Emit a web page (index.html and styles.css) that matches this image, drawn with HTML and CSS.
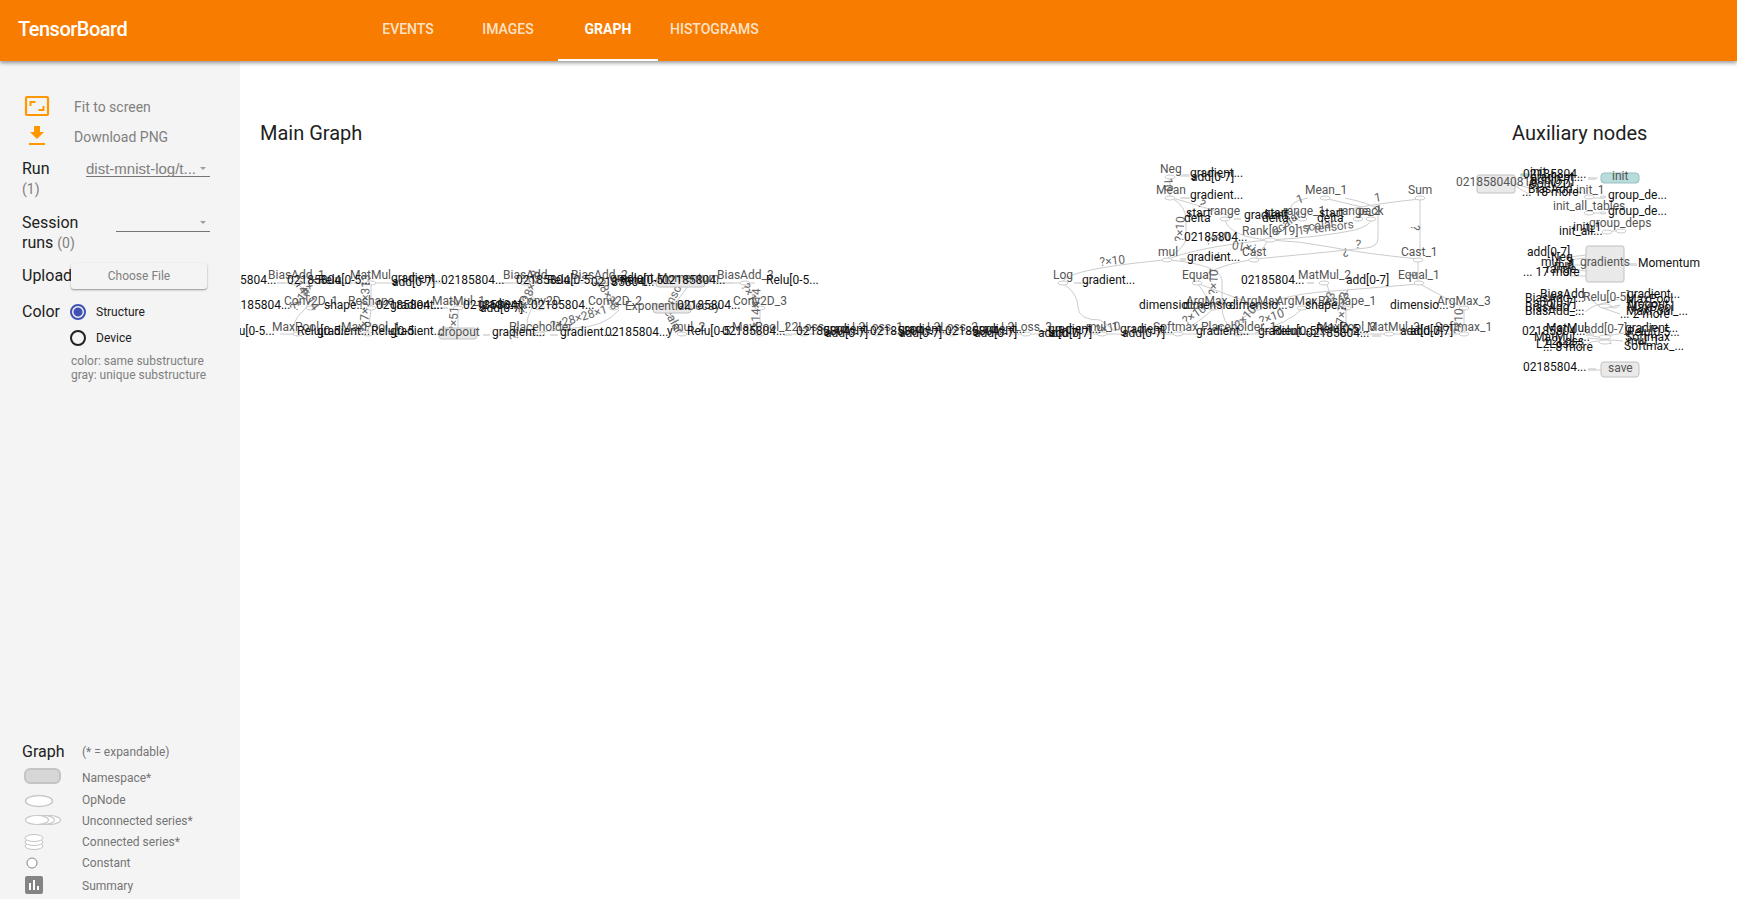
FILE: index.html
```html
<!DOCTYPE html>
<html lang="en">
<head>
<meta charset="utf-8">
<title>TensorBoard</title>
<link rel="stylesheet" href="styles.css">
</head>
<body>
<header class="toolbar">
  <h1 class="brand">TensorBoard</h1>
  <nav class="tabs">
    <a class="tab" href="#events">EVENTS</a>
    <a class="tab" href="#images">IMAGES</a>
    <a class="tab active" href="#graph" aria-current="page">GRAPH</a>
    <a class="tab" href="#histograms">HISTOGRAMS</a>
  </nav>
</header>
<div class="content">
  <aside class="sidebar">
    <div class="controls">
      <button class="action" type="button">
        <svg class="icon" width="30" height="30" viewBox="0 0 30 30"><path fill="none" stroke="#ff9800" stroke-width="2.200" d="M5 5h20q1 0 1 1v16q0 1-1 1H5q-1 0-1-1V6q0-1 1-1z"/><path fill="none" stroke="#ff9800" stroke-width="2" d="M8.500 14v-4h5M21.500 14v4h-5"/></svg>
        Fit to screen
      </button>
      <button class="action" type="button">
        <svg class="icon" width="30" height="30" viewBox="0 0 30 30"><path fill="#ff9800" d="M12 4h6v6h4l-7 7-7-7h4zM7 21h16v2H7z"/></svg>
        Download PNG
      </button>
      <div class="field">
        <label class="title" for="run">Run <small class="count block">(1)</small></label>
        <span class="dropdown"><select id="run"><option>dist-mnist-log/t...</option></select></span>
      </div>
      <div class="field sessions">
        <label class="title" for="session">Session runs <small class="count">(0)</small></label>
        <span class="dropdown"><select id="session"><option></option></select></span>
      </div>
      <div class="upload">
        <span class="title" id="upload-title">Upload</span>
        <button class="choose" type="button">Choose File</button>
      </div>
      <div class="color" role="radiogroup" aria-labelledby="color-title">
        <span class="title" id="color-title">Color</span>
        <div class="choices">
          <label class="choice"><input type="radio" name="color" checked>Structure</label>
          <label class="choice"><input type="radio" name="color">Device</label>
          <p class="note">color: same substructure<br>gray: unique substructure</p>
        </div>
      </div>
    </div>
    <div class="legend">
      <div class="legend-row head"><span class="title">Graph</span><span>(* = expandable)</span></div>
      <div class="legend-row tall"><svg width="40" height="20"><rect x="3" y="1" width="35" height="14" rx="5" fill="#d6d6d6" stroke="#c4c4c4" stroke-width="2"/></svg><span>Namespace*</span></div>
      <div class="legend-row"><svg width="40" height="20"><ellipse cx="17" cy="11" rx="13.500" ry="5.500" fill="#fff" stroke="#c8c8c8" stroke-width="1.500"/></svg><span>OpNode</span></div>
      <div class="legend-row"><svg width="40" height="20"><g fill="#fff" stroke="#c8c8c8" stroke-width="1.200"><ellipse cx="27" cy="9" rx="11.500" ry="4.500"/><ellipse cx="21" cy="9" rx="11.500" ry="4.500"/><ellipse cx="15" cy="9" rx="11.500" ry="4.500"/></g></svg><span>Unconnected series*</span></div>
      <div class="legend-row"><svg width="40" height="20"><g fill="#fff" stroke="#c4c4c4"><ellipse cx="12" cy="14" rx="9" ry="3.500"/><ellipse cx="12" cy="10" rx="9" ry="3.500"/><ellipse cx="12" cy="6" rx="9" ry="3.500"/></g></svg><span>Connected series*</span></div>
      <div class="legend-row"><svg width="40" height="20"><circle cx="10" cy="10" r="5" fill="#fff" stroke="#888"/></svg><span>Constant</span></div>
      <div class="legend-row last"><svg width="40" height="20"><rect x="3" y="0" width="18" height="18" rx="2" fill="#848484"/><path fill="#fff" d="M7 7h2v7H7zM11 4h2v10h-2zM15 10h2v4h-2z"/></svg><span>Summary</span></div>
    </div>
  </aside>
  <main class="stage">
    <svg class="graph" role="img" aria-label="Main graph and auxiliary nodes">
      <g transform="translate(-240 -61)">
        <g class="edges">
          <path d="M1170 177V197M1172 198Q1186 206 1186 220T1186 240Q1182 250 1168 258M1172 198Q1192 203 1230 216M1225 220Q1230 237 1270 240Q1300 241 1330 247T1418 259M1308 198Q1285 202 1293 214M1345 198Q1378 205 1378 212V238Q1378 247 1366 248Q1310 254 1255 259M1420 199Q1380 203 1345 210M1420 200V257M1328 199L1362 207M1270 240Q1322 237 1355 230Q1371 225 1372 219M1267 242L1256 258M1267 240Q1200 247 1171 258M1165 260Q1100 266 1075 274Q1066 277 1063 281M1064 284Q1078 294 1078 307T1100 320L1114 330M1170 260Q1220 265 1222 280V305Q1221 322 1236 333M1250 260Q1210 267 1198 281M1198 284L1213 306M1199 284L1258 306M1327 284Q1329 300 1346 307V333M1418 262V281M1418 284Q1360 289 1320 292Q1280 296 1267 305M1420 284L1460 306M1464 309V333M1213 309Q1200 322 1179 333M1302 309Q1290 322 1255 333M1258 309Q1234 320 1230 333"/>
          <path d="M298 284Q315 300 303 311T294 333M371 284V309L368 333M458 309V328M527 284Q537 298 531 310T528 326Q522 335 534 336M602 284Q614 300 615 308M619 310Q605 327 574 328Q545 331 531 334M689 285L670 310M669 313L683 333M743 284Q755 290 754 307M760 309V333"/>
          <path d="M786 334h294M280 334h120M280 283h165M500 283h255M1070 334h130M1210 334h250M1180 176h10M1180 198h10M1080 283h10"/>
          <path d="M1515 184l14-9M1515 184l14 4M1515 186l14 8M1588 178h10M1592 198h12M1592 213h12M1605 231h12M1570 257l16-2M1570 260l16-2M1570 265h16M1570 269l16 2M1570 276h16M1624 264h12M1584 295q8 5 14 10q5 4 22 0q-5 6-15 0q-8-3-20 7M1597 305l22-6M1600 307l20 7M1587 333q10 8 25 0M1587 344q10-6 25 0M1587 338l36 3M1600 337l24-4M1588 370h14"/>
        </g>
        <g class="nodes">
          <ellipse cx="1170" cy="177" rx="5" ry="2"/><ellipse cx="1170" cy="198" rx="5" ry="2"/><ellipse cx="1225" cy="219" rx="5" ry="2"/><ellipse cx="1302" cy="219" rx="5" ry="2"/><ellipse cx="1358" cy="219" rx="5" ry="2"/><ellipse cx="1371" cy="219" rx="5" ry="2"/><ellipse cx="1325" cy="198" rx="5" ry="2"/><ellipse cx="1420" cy="198" rx="5" ry="2"/><ellipse cx="1270" cy="240" rx="6" ry="2"/><ellipse cx="1167" cy="260" rx="5" ry="2"/><ellipse cx="1254" cy="260" rx="5" ry="2"/><ellipse cx="1418" cy="260" rx="5" ry="2"/><ellipse cx="1063" cy="283" rx="5" ry="2"/><ellipse cx="1197" cy="283" rx="5" ry="2"/><ellipse cx="1324" cy="283" rx="5" ry="2"/><ellipse cx="1419" cy="283" rx="5" ry="2"/><ellipse cx="1213" cy="308" rx="5" ry="2"/><ellipse cx="1258" cy="308" rx="5" ry="2"/><ellipse cx="1302" cy="308" rx="5" ry="2"/><ellipse cx="1346" cy="308" rx="5" ry="2"/><ellipse cx="1464" cy="308" rx="5" ry="2"/><ellipse cx="1178" cy="334" rx="5" ry="2"/><ellipse cx="1238" cy="334" rx="5" ry="2"/><ellipse cx="1346" cy="334" rx="5" ry="2"/><ellipse cx="1389" cy="334" rx="5" ry="2"/><ellipse cx="1464" cy="334" rx="5" ry="2"/><ellipse cx="1102" cy="334" rx="5" ry="2"/><ellipse cx="295" cy="283" rx="5" ry="2"/><ellipse cx="371" cy="283" rx="5" ry="2"/><ellipse cx="525" cy="283" rx="5" ry="2"/><ellipse cx="599" cy="283" rx="5" ry="2"/><ellipse cx="745" cy="283" rx="5" ry="2"/><ellipse cx="311" cy="308" rx="5" ry="2"/><ellipse cx="371" cy="308" rx="5" ry="2"/><ellipse cx="458" cy="308" rx="5" ry="2"/><ellipse cx="540" cy="308" rx="5" ry="2"/><ellipse cx="614" cy="308" rx="5" ry="2"/><ellipse cx="760" cy="308" rx="5" ry="2"/><ellipse cx="298" cy="334" rx="5" ry="2"/><ellipse cx="368" cy="334" rx="5" ry="2"/><ellipse cx="540" cy="334" rx="5" ry="2"/><ellipse cx="682" cy="334" rx="5" ry="2"/><ellipse cx="760" cy="334" rx="5" ry="2"/><ellipse cx="804" cy="334" rx="5" ry="2"/><ellipse cx="878" cy="334" rx="5" ry="2"/><ellipse cx="952" cy="334" rx="5" ry="2"/><ellipse cx="1026" cy="334" rx="5" ry="2"/>
          <ellipse cx="1589" cy="197" rx="5" ry="2"/><ellipse cx="1603" cy="197" rx="3" ry="1"/><ellipse cx="1589" cy="213" rx="5" ry="2"/><ellipse cx="1603" cy="213" rx="3" ry="1"/><ellipse cx="1607" cy="232" rx="5" ry="2"/><ellipse cx="1621" cy="231" rx="5" ry="2"/><ellipse cx="1605" cy="306" rx="6" ry="2"/><ellipse cx="1605" cy="337" rx="6" ry="2"/><ellipse cx="1605" cy="342" rx="6" ry="2"/>
        </g>
        <g class="stubs">
          <rect x="1182" y="174" width="7" height="2"/><rect x="1182" y="197" width="7" height="2"/><rect x="1234" y="218" width="7" height="2"/><rect x="1180" y="258" width="6" height="3"/><rect x="1074" y="282" width="7" height="2"/><rect x="1307" y="282" width="7" height="2"/><rect x="1372" y="334" width="9" height="3"/><rect x="440" y="307" width="8" height="2"/><rect x="483" y="334" width="7" height="2"/><rect x="277" y="282" width="8" height="2"/><rect x="505" y="282" width="8" height="2"/><rect x="726" y="282" width="8" height="2"/><rect x="550" y="334" width="8" height="2"/><rect x="784" y="334" width="8" height="2"/><rect x="1588" y="177" width="8" height="3"/><rect x="1588" y="368" width="8" height="3"/><rect x="1630" y="263" width="7" height="3"/><rect x="1586" y="333" width="8" height="3"/>
        </g>
        <g class="dims">
          <text transform="translate(296 312) rotate(-55)">?×14×1</text><text transform="translate(294 284) rotate(55)">14×14</text><text transform="translate(368 333) rotate(-88)">?×7×7×313</text><text transform="translate(457 332) rotate(-88)">?×512</text><text transform="translate(526 315) rotate(-72)">?×28×28</text><text transform="translate(518 340) rotate(-88)">?×</text><text transform="translate(552 330) rotate(-17)">?×28×28×1</text><text transform="translate(596 282) rotate(60)">28×28</text><text transform="translate(668 314) rotate(-62)">tensors</text><text transform="translate(661 306) rotate(62)">scalar</text><text transform="translate(759 334) rotate(-88)">?×14×14</text><text transform="translate(741 286) rotate(62)">?×14</text>
          <text transform="translate(1164 178) rotate(88)">10</text><text transform="translate(1183 242) rotate(-86)">?×10</text><text transform="translate(1206 245) rotate(-12)">?×10</text><text transform="translate(1258 245) rotate(190)">?×10</text><text transform="translate(1100 266) rotate(-6)">?×10</text><text transform="translate(1298 204) rotate(-20)">1</text><text transform="translate(1375 202) rotate(-10)">1</text><text transform="translate(1298 235) rotate(-7)">17 tensors</text><text transform="translate(1276 236) rotate(-38)">scalar</text><text transform="translate(1303 232) rotate(-9)">scalar</text><text transform="translate(1355 248) rotate(5)">?</text><text transform="translate(1348 248) rotate(175)">?</text><text transform="translate(1411 225) rotate(90)">?</text><text transform="translate(1217 295) rotate(-88)">?×10</text><text transform="translate(1221 252) rotate(175)">?</text><text transform="translate(1186 325) rotate(-35)">?×10</text><text transform="translate(1240 329) rotate(-48)">?×10</text><text transform="translate(1261 325) rotate(-20)">?×10</text><text transform="translate(1331 306) rotate(-70)">×3</text><text transform="translate(1344 325) rotate(-82)">7×7×3</text><text transform="translate(1462 334) rotate(-88)">?×10</text><text transform="translate(1407 273) rotate(75)">?</text><text transform="translate(1197 205) rotate(40)">?</text><text transform="translate(1350 291) rotate(190)">?</text><text transform="translate(1096 334) rotate(-10)">?×10</text>
        </g>
        <g class="boxes">
          <rect x="656" y="277" width="49" height="10" rx="3"/><rect x="653" y="304" width="38" height="9" rx="3"/><rect x="439" y="328" width="38" height="11" rx="3"/><rect x="1477" y="175" width="38" height="18" rx="2"/><rect x="1586" y="246" width="38" height="36" rx="2"/><rect x="1601" y="362" width="38" height="15" rx="3"/><rect class="teal" x="1601" y="173" width="38" height="10" rx="3"/><rect class="teal" x="1521" y="174" width="9" height="2"/>
        </g>
        <g class="labels">
          <text x="268" y="279">BiasAdd_1</text><text x="350" y="279">MatMul</text><text x="503" y="279">BiasAdd</text><text x="571" y="279">BiasAdd_2</text><text x="657" y="282">Momentum</text><text x="717" y="279">BiasAdd_3</text>
          <text x="284" y="305">Conv2D_1</text><text x="348" y="305">Reshape</text><text x="432" y="305">MatMul_1</text><text x="519" y="305">Conv2D</text><text x="588" y="305">Conv2D_2</text><text x="625" y="310">ExponentialDecay</text><text x="733" y="305">Conv2D_3</text>
          <text x="272" y="331">MaxPool</text><text x="341" y="331">MaxPool_1</text><text x="438" y="336">dropout</text><text x="509" y="331">Placeholder</text><text x="673" y="331">mul_2</text><text x="732" y="331">MaxPool_2</text><text x="785" y="331">L2Loss</text><text x="852" y="331">L2Loss_1</text><text x="927" y="331">L2Loss_2</text><text x="1001" y="331">L2Loss_3</text><text x="1086" y="331">mul_1</text><text x="1153" y="331">Softmax</text><text x="1201" y="331">Placeholder_1</text><text x="1317" y="331">MaxPool_3</text><text x="1367" y="331">MatMul_3</text><text x="1435" y="331">Softmax_1</text>
          <text x="1160" y="173">Neg</text><text x="1156" y="194">Mean</text><text x="1210" y="215">range</text><text x="1283" y="215">range_1</text><text x="1338" y="215">range_2</text><text x="1358" y="215">pack</text><text x="1242" y="235">Rank[0-19]</text><text x="1305" y="194">Mean_1</text><text x="1408" y="194">Sum</text><text x="1158" y="256">mul</text><text x="1242" y="256">Cast</text><text x="1401" y="256">Cast_1</text><text x="1053" y="279">Log</text><text x="1182" y="279">Equal</text><text x="1298" y="279">MatMul_2</text><text x="1398" y="279">Equal_1</text><text x="1186" y="305">ArgMax_1</text><text x="1239" y="305">ArgMax</text><text x="1276" y="305">ArgMax_2</text><text x="1318" y="305">Reshape_1</text><text x="1437" y="305">ArgMax_3</text>
          <text x="1456" y="186">021858040816</text><text x="1612" y="180">init</text><text x="1576" y="194">init_1</text><text x="1553" y="210">init_all_tables</text><text x="1589" y="227">group_deps</text><text x="1580" y="266">gradients</text><text x="1583" y="301">Relu[0-5]</text><text x="1584" y="333">add[0-7]</text><text x="1608" y="372">save</text>
        </g>
        <g class="notes">
          <text x="213" y="284">02185804...</text><text x="287" y="284">02185804...</text><text x="318" y="284">Relu[0-5...</text><text x="391" y="282">gradient...</text><text x="392" y="286">add[0-7]</text><text x="441" y="284">02185804...</text><text x="516" y="284">02185804...</text><text x="547" y="284">Relu[0-5...</text><text x="591" y="286">02185804...</text><text x="610" y="282">gradient...</text><text x="620" y="284">Relu[0-5...</text><text x="662" y="284">02185804...</text><text x="766" y="284">Relu[0-5...</text>
          <text x="227" y="309">02185804...</text><text x="324" y="309">shape...</text><text x="376" y="309">02185804...</text><text x="390" y="309">gradient...</text><text x="463" y="309">02185804...</text><text x="478" y="308">gradient...</text><text x="480" y="312">add[0-7]</text><text x="531" y="309">02185804...</text><text x="677" y="309">02185804...</text>
          <text x="222" y="335">Relu[0-5...</text><text x="297" y="335">Relu[0-5...</text><text x="317" y="335">gradient...</text><text x="371" y="335">Relu[0-5...</text><text x="390" y="335">gradient...</text><text x="492" y="336">gradient...</text><text x="560" y="336">gradient...</text><text x="605" y="336">02185804...</text><text x="667" y="335">y</text><text x="687" y="335">Relu[0-5...</text><text x="722" y="335">02185804...</text><text x="796" y="335">02185804...</text><text x="823" y="333">gradient...</text><text x="825" y="337">add[0-7]</text><text x="870" y="335">02185804...</text><text x="898" y="333">gradient...</text><text x="899" y="337">add[0-7]</text><text x="945" y="335">02185804...</text><text x="972" y="333">gradient...</text><text x="974" y="337">add[0-7]</text><text x="1048" y="333">gradient...</text><text x="1038" y="337">add[0-7]</text><text x="1049" y="337">add[0-7]</text><text x="1120" y="333">gradient...</text><text x="1122" y="337">add[0-7]</text><text x="1196" y="335">gradient...</text><text x="1258" y="335">gradient...</text><text x="1273" y="335">Relu[0-5...</text><text x="1306" y="337">02185804...</text><text x="1316" y="333">Relu[0-5...</text><text x="1400" y="335">add[0-7]</text><text x="1410" y="335">add[0-7]</text>
          <text x="1190" y="177">gradient...</text><text x="1191" y="181">add[0-7]</text><text x="1190" y="199">gradient...</text><text x="1186" y="217">start</text><text x="1184" y="222">delta</text><text x="1244" y="219">gradient...</text><text x="1264" y="217">start</text><text x="1262" y="222">delta</text><text x="1319" y="217">start</text><text x="1317" y="222">delta</text><text x="1184" y="241">02185804...</text><text x="1187" y="261">gradient...</text><text x="1082" y="284">gradient...</text><text x="1241" y="284">02185804...</text><text x="1346" y="284">add[0-7]</text><text x="1139" y="309">dimensio...</text><text x="1183" y="309">dimensio...</text><text x="1229" y="309">dimensio...</text><text x="1305" y="309">shape...</text><text x="1390" y="309">dimensio...</text>
          <text x="1523" y="178">02185804...</text><text x="1530" y="176">init</text><text x="1530" y="181">gradient...</text><text x="1531" y="184">add[0-7]</text><text x="1529" y="188">Conv2D</text><text x="1528" y="193">BiasAdd...</text><text x="1522" y="196">... 18 more</text><text x="1608" y="199">group_de...</text><text x="1608" y="215">group_de...</text><text x="1573" y="231">init_1</text><text x="1559" y="235">init_all...</text>
          <text x="1527" y="256">add[0-7]</text><text x="1551" y="261">Neg</text><text x="1541" y="266">mul_3</text><text x="1554" y="269">mul</text><text x="1546" y="273">range</text><text x="1523" y="276">... 17 more</text><text x="1638" y="267">Momentum</text>
          <text x="1540" y="298">BiasAdd</text><text x="1525" y="302">BiasAdd_...</text><text x="1533" y="307">add[0-7]</text><text x="1525" y="311">BiasAdd_...</text><text x="1525" y="315">BiasAdd_...</text><text x="1627" y="298">gradient...</text><text x="1626" y="303">MaxPool</text><text x="1627" y="308">dropout</text><text x="1627" y="311">MaxPool</text><text x="1626" y="315">MaxPool_...</text><text x="1620" y="318">... 2 more</text>
          <text x="1546" y="332">MatMul</text><text x="1522" y="335">02185804...</text><text x="1534" y="341">MatMul_...</text><text x="1545" y="345">L2Loss</text><text x="1536" y="348">L2Loss...</text><text x="1543" y="351">... 8 more</text><text x="1625" y="332">gradient...</text><text x="1627" y="336">Relu[0-5...</text><text x="1625" y="341">Softmax</text><text x="1627" y="345">mul_1</text><text x="1624" y="350">Softmax_...</text><text x="1523" y="371">02185804...</text>
        </g>
        <g class="headings"><text x="260" y="140">Main Graph</text><text x="1512" y="140">Auxiliary nodes</text></g>
      </g>
    </svg>
  </main>
</div>
</body>
</html>
```
FILE: styles.css
```css
* { box-sizing: border-box; }
body { margin: 0; height: 100vh; display: flex; flex-direction: column; overflow: hidden; background: #fff; color: #212121; font-family: Roboto, sans-serif; font-size: 12px; }
button, select { font-family: inherit; }
.toolbar { flex: none; display: flex; height: 61px; background: #f77c00; box-shadow: 0 2px 4px rgba(0,0,0,.4); z-index: 1; }
.brand { width: 358px; margin: 0; padding-left: 18px; color: #fff; font-size: 20px; font-weight: 500; line-height: 59px; letter-spacing: -0.025em; }
.tabs { display: flex; }
.tab { min-width: 100px; padding: 0 12px; border-bottom: 2px solid transparent; color: rgba(255,255,255,.8); font-size: 14px; font-weight: 500; line-height: 59px; text-align: center; text-decoration: none; }
.tab.active { border-bottom-color: #fff; color: #fff; font-weight: 700; }
.content { flex: 1; display: flex; min-height: 0; }
.sidebar { flex: none; width: 240px; display: flex; flex-direction: column; justify-content: space-between; padding: 31px 30px 0 22px; background: #f4f4f4; }
.action { display: flex; align-items: center; gap: 22px; width: 100%; height: 30px; padding: 0; border: 0; background: none; color: #808080; font-size: 14px; }
.title { color: #212121; font-size: 16px; line-height: 20px; }
.count { color: #808080; font-size: 14px; }
.count.block { display: block; }
.field { display: flex; align-items: flex-start; justify-content: space-between; margin-top: 7px; }
.field .title { width: 62px; }
.field .count { white-space: nowrap; }
.dropdown { position: relative; width: 124px; height: 18px; border-bottom: 1px solid #757575; }
.sessions { margin-top: 14px; }
.sessions .title { width: 80px; }
.sessions .dropdown { width: 94px; height: 19px; }
.dropdown::after { content: ""; position: absolute; right: 4px; top: 8px; border: 3px solid transparent; border-top-color: #9e9e9e; pointer-events: none; }
.dropdown select { display: block; width: 100%; height: 18px; padding: 0; appearance: none; border: 0; background: none; color: #808080; font: 15px "Liberation Sans", sans-serif; }
.upload { display: flex; align-items: center; height: 26px; margin-top: 10px; }
.upload .title { width: 49px; }
.choose { width: 136px; height: 26px; border: 0; border-radius: 3px; background: #f4f4f4; box-shadow: 0 1px 2px rgba(0,0,0,.4); color: #808080; font-size: 12px; }
.color { display: flex; margin-top: 13px; }
.color .title { width: 48px; }
.choices { flex: 1; }
.choice { display: flex; align-items: center; gap: 10px; height: 20px; margin-bottom: 6px; font-size: 12px; }
.choice input { width: 16px; height: 16px; margin: 0; appearance: none; border: 2px solid #212121; border-radius: 50%; }
.choice input:checked { border-color: #3f51b5; background: radial-gradient(circle, #3f51b5 4px, transparent 5px); }
.note { margin: 0; color: #808080; line-height: 14px; white-space: nowrap; padding-left: 1px; }
.legend { color: #757575; }
.legend-row { display: flex; align-items: center; gap: 20px; height: 21px; }
.legend-row .title { width: 40px; }
.legend-row span { white-space: nowrap; }
.head { height: 29px; }
.tall { height: 23px; }
.last { height: 26px; }
.stage { flex: 1; min-width: 0; }
.graph { display: block; width: 100%; height: 100%; }
.edges { fill: none; stroke: #ccc; }
.nodes { fill: #fff; stroke: #ccc; }
.stubs { fill: #ddd; }
.boxes { fill: #e9e9e9; stroke: #c0c0c0; }
.boxes .teal { fill: #b8dbdb; stroke: #9bc0c0; }
.labels { fill: #555; }
.dims { fill: #666; }
.notes { fill: #111; }
.headings { fill: #212121; font-size: 20px; }
```
